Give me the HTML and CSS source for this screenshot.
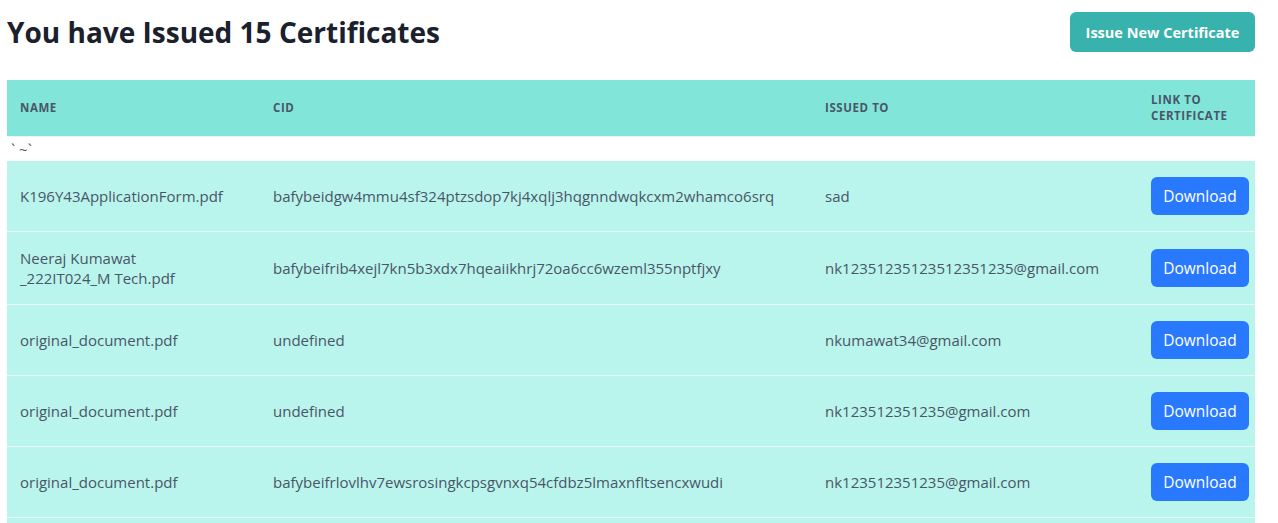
FILE: index.html
```html
<!DOCTYPE html>
<html>
<head>
<meta charset="utf-8">
<link rel="stylesheet" href="styles.css">
</head>
<body>
<div class="page">
  <div class="topbar">
    <h1 class="title">You have Issued 15 Certificates</h1>
    <button class="issue-btn">Issue New Certificate</button>
  </div>
  <table class="certs">
    <colgroup>
      <col class="c1"><col class="c2"><col class="c3"><col class="c4">
    </colgroup>
    <thead>
      <tr>
        <th>Name</th>
        <th>CID</th>
        <th>Issued To</th>
        <th>Link to<br>Certificate</th>
      </tr>
    </thead>
    <tbody>
      <tr class="stray"><td colspan="4">` ~`</td></tr>
      <tr>
        <td>K196Y43ApplicationForm.pdf</td>
        <td>bafybeidgw4mmu4sf324ptzsdop7kj4xqlj3hqgnndwqkcxm2whamco6srq</td>
        <td>sad</td>
        <td><button class="dl-btn">Download</button></td>
      </tr>
      <tr>
        <td>Neeraj Kumawat<br>_222IT024_M Tech.pdf</td>
        <td>bafybeifrib4xejl7kn5b3xdx7hqeaiikhrj72oa6cc6wzeml355nptfjxy</td>
        <td>nk12351235123512351235@gmail.com</td>
        <td><button class="dl-btn">Download</button></td>
      </tr>
      <tr>
        <td>original_document.pdf</td>
        <td>undefined</td>
        <td>nkumawat34@gmail.com</td>
        <td><button class="dl-btn">Download</button></td>
      </tr>
      <tr>
        <td>original_document.pdf</td>
        <td>undefined</td>
        <td>nk123512351235@gmail.com</td>
        <td><button class="dl-btn">Download</button></td>
      </tr>
      <tr>
        <td>original_document.pdf</td>
        <td>bafybeifrlovlhv7ewsrosingkcpsgvnxq54cfdbz5lmaxnfltsencxwudi</td>
        <td>nk123512351235@gmail.com</td>
        <td><button class="dl-btn">Download</button></td>
      </tr>
      <tr class="empty">
        <td colspan="4"></td>
      </tr>
    </tbody>
  </table>
</div>
</body>
</html>
```
FILE: styles.css
```css
html, body {
  margin: 0;
  padding: 0;
  background: #ffffff;
}
body {
  font-family: "Open Sans", "Noto Sans", sans-serif;
  color: #4a5568;
}
.page {
  padding: 12px 23px 0 7px;
}
.topbar {
  display: flex;
  justify-content: space-between;
  align-items: center;
  height: 40px;
  margin-bottom: 28px;
}
.title {
  margin: 0;
  font-size: 28px;
  font-weight: 700;
  color: #1a202c;
  line-height: 40px;
}
.issue-btn {
  height: 40px;
  width: 185px;
  border: none;
  border-radius: 6px;
  background: #38b2ac;
  color: #ffffff;
  font-family: "Open Sans", sans-serif;
  font-weight: 700;
  font-size: 14.5px;
  padding: 0;
}
.certs {
  width: 1248px;
  border-collapse: collapse;
  table-layout: fixed;
}
.c1 { width: 253px; }
.c2 { width: 552px; }
.c3 { width: 326px; }
.c4 { width: 117px; }
.certs thead tr {
  background: #81e6d9;
  height: 56px;
}
.certs th {
  text-align: left;
  font-size: 11.5px;
  font-weight: 700;
  text-transform: uppercase;
  letter-spacing: 0.05em;
  color: #4a5568;
  padding: 0 13px;
  line-height: 16px;
  border-bottom: 1px solid #edf2f7;
}
.certs tbody tr {
  background: #b9f5ec;
}
.certs td {
  padding: 16px 13px;
  font-size: 15px;
  line-height: 20px;
  border-bottom: 1px solid #e8faf6;
  vertical-align: middle;
  white-space: nowrap;
}
.certs tbody tr.stray {
  background: #ffffff;
}
.certs tr.stray td {
  padding: 0 0 0 4px;
  height: 24px;
  font-size: 15px;
  line-height: 22px;
  color: #4a5568;
  border-bottom: none;
}
.certs tr.empty td {
  height: 40px;
  padding: 0;
}
.dl-btn {
  display: block;
  height: 38px;
  width: 98px;
  border: none;
  border-radius: 6px;
  background: #2979ff;
  color: #ffffff;
  font-family: "Open Sans", sans-serif;
  font-size: 15.5px;
  padding: 0;
}
```
